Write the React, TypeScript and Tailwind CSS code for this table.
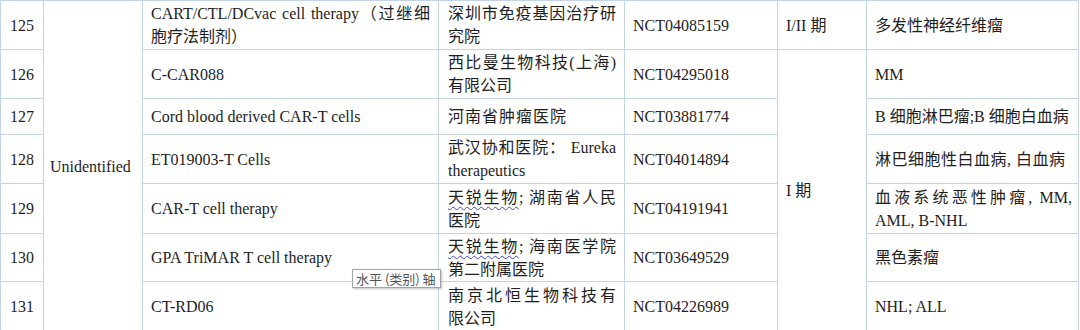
import React from 'react';

const line = 'border-r border-b border-[#c3d3e8]';
const cell = `${line} flex flex-col justify-center overflow-hidden`;
const just = 'text-justify [text-align-last:justify] whitespace-nowrap';

function Spell({ children }: { children: React.ReactNode }) {
  return (
    <span className="underline decoration-wavy decoration-[#4646d6] decoration-1 underline-offset-[3px]">
      {children}
    </span>
  );
}

type Row = {
  no: string;
  name: React.ReactNode;
  sponsor: React.ReactNode;
  nct: string;
  indication: React.ReactNode;
};

const rows: Row[] = [
  {
    no: '125',
    name: (
      <>
        <div className={just}>CART/CTL/DCvac cell therapy（过继细</div>
        <div>胞疗法制剂）</div>
      </>
    ),
    sponsor: (
      <>
        <div className={just}>深圳市免疫基因治疗研</div>
        <div>究院</div>
      </>
    ),
    nct: 'NCT04085159',
    indication: <div>多发性神经纤维瘤</div>,
  },
  {
    no: '126',
    name: <div>C-CAR088</div>,
    sponsor: (
      <>
        <div className={just}>西比曼生物科技(上海)</div>
        <div>有限公司</div>
      </>
    ),
    nct: 'NCT04295018',
    indication: <div>MM</div>,
  },
  {
    no: '127',
    name: <div>Cord blood derived CAR-T cells</div>,
    sponsor: <div className="tracking-[1px]">河南省肿瘤医院</div>,
    nct: 'NCT03881774',
    indication: <div>B 细胞淋巴瘤;B 细胞白血病</div>,
  },
  {
    no: '128',
    name: <div>ET019003-T Cells</div>,
    sponsor: (
      <>
        <div className={just}>武汉协和医院： Eureka</div>
        <div>therapeutics</div>
      </>
    ),
    nct: 'NCT04014894',
    indication: <div className="tracking-[0.5px]">淋巴细胞性白血病, 白血病</div>,
  },
  {
    no: '129',
    name: <div>CAR-T cell therapy</div>,
    sponsor: (
      <>
        <div className={just}>
          <Spell>天锐生物</Spell>; 湖南省人民
        </div>
        <div>医院</div>
      </>
    ),
    nct: 'NCT04191941',
    indication: (
      <>
        <div className={just}>血液系统恶性肿瘤, MM,</div>
        <div>AML, B-NHL</div>
      </>
    ),
  },
  {
    no: '130',
    name: <div>GPA TriMAR T cell therapy</div>,
    sponsor: (
      <>
        <div className={just}>
          <Spell>天锐生物</Spell>; 海南医学院
        </div>
        <div>第二附属医院</div>
      </>
    ),
    nct: 'NCT03649529',
    indication: <div>黑色素瘤</div>,
  },
  {
    no: '131',
    name: <div>CT-RD06</div>,
    sponsor: (
      <>
        <div className={just}>南京北恒生物科技有</div>
        <div>限公司</div>
      </>
    ),
    nct: 'NCT04226989',
    indication: <div>NHL; ALL</div>,
  },
];

const rowStart = [
  'row-start-1',
  'row-start-2',
  'row-start-3',
  'row-start-4',
  'row-start-5',
  'row-start-6',
  'row-start-7',
];

export default function App() {
  return (
    <div className="relative h-[330px] w-[1080px] overflow-hidden bg-white">
      <div
        className="grid grid-cols-[43px_99px_296px_186px_153px_89px_212px] grid-rows-[49px_49px_36px_49px_50px_48px_50px] border-t border-l border-[#c3d3e8] text-[16px] leading-[23px] text-[#1e1e1e] w-fit"
        style={{ fontFamily: '"Liberation Serif", "Noto Sans CJK SC", serif' }}
      >
        {rows.map((r, i) => (
          <React.Fragment key={r.no}>
            <div className={`${cell} col-start-1 ${rowStart[i]} items-center`}>{r.no}</div>
            <div className={`${cell} col-start-3 ${rowStart[i]} px-2`}>{r.name}</div>
            <div className={`${cell} col-start-4 ${rowStart[i]} pl-[9px] pr-[8px]`}>{r.sponsor}</div>
            <div className={`${cell} col-start-5 ${rowStart[i]} px-2`}>{r.nct}</div>
            <div className={`${cell} col-start-7 ${rowStart[i]} pl-2 pr-[6px]`}>{r.indication}</div>
          </React.Fragment>
        ))}

        {/* merged cells */}
        <div className={`${cell} col-start-2 row-start-1 row-span-7 pl-[6px]`}>Unidentified</div>
        <div className={`${cell} col-start-6 row-start-1 px-2`}>I/II 期</div>
        <div className={`${cell} col-start-6 row-start-2 row-span-6 px-2`}>I 期</div>
      </div>

      {/* chart-axis tooltip */}
      <div
        className="absolute left-[352px] top-[269px] h-[19px] w-[89px] border border-[#a3a3a3] bg-white pl-[3px] text-[13px] leading-[17px] text-[#555] whitespace-nowrap shadow-[1px_1px_2px_rgba(0,0,0,0.25)]"
        style={{ fontFamily: '"Noto Sans CJK SC", "Noto Sans", sans-serif' }}
      >
        水平 (类别) 轴
      </div>
    </div>
  );
}
